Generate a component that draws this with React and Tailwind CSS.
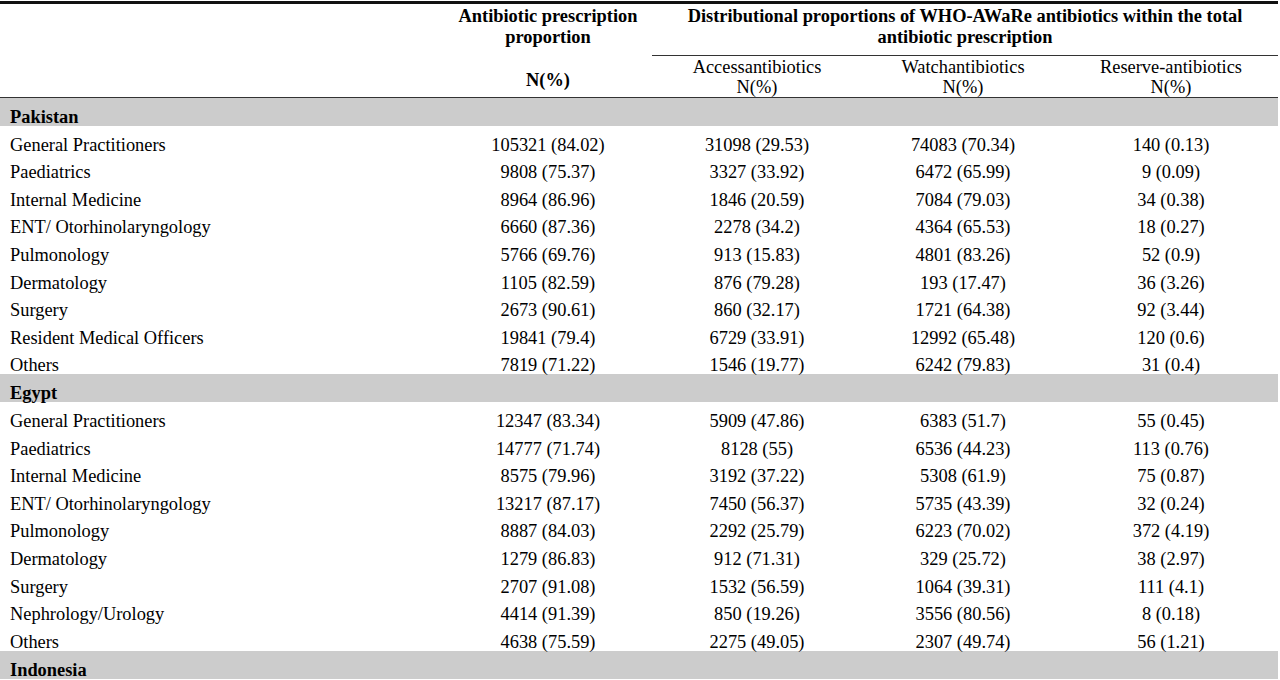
import React from "react";

const sections = [
  {
    name: "Pakistan",
    rows: [
      ["General Practitioners", "105321 (84.02)", "31098 (29.53)", "74083 (70.34)", "140 (0.13)"],
      ["Paediatrics", "9808 (75.37)", "3327 (33.92)", "6472 (65.99)", "9 (0.09)"],
      ["Internal Medicine", "8964 (86.96)", "1846 (20.59)", "7084 (79.03)", "34 (0.38)"],
      ["ENT/ Otorhinolaryngology", "6660 (87.36)", "2278 (34.2)", "4364 (65.53)", "18 (0.27)"],
      ["Pulmonology", "5766 (69.76)", "913 (15.83)", "4801 (83.26)", "52 (0.9)"],
      ["Dermatology", "1105 (82.59)", "876 (79.28)", "193 (17.47)", "36 (3.26)"],
      ["Surgery", "2673 (90.61)", "860 (32.17)", "1721 (64.38)", "92 (3.44)"],
      ["Resident Medical Officers", "19841 (79.4)", "6729 (33.91)", "12992 (65.48)", "120 (0.6)"],
      ["Others", "7819 (71.22)", "1546 (19.77)", "6242 (79.83)", "31 (0.4)"],
    ],
  },
  {
    name: "Egypt",
    rows: [
      ["General Practitioners", "12347 (83.34)", "5909 (47.86)", "6383 (51.7)", "55 (0.45)"],
      ["Paediatrics", "14777 (71.74)", "8128 (55)", "6536 (44.23)", "113 (0.76)"],
      ["Internal Medicine", "8575 (79.96)", "3192 (37.22)", "5308 (61.9)", "75 (0.87)"],
      ["ENT/ Otorhinolaryngology", "13217 (87.17)", "7450 (56.37)", "5735 (43.39)", "32 (0.24)"],
      ["Pulmonology", "8887 (84.03)", "2292 (25.79)", "6223 (70.02)", "372 (4.19)"],
      ["Dermatology", "1279 (86.83)", "912 (71.31)", "329 (25.72)", "38 (2.97)"],
      ["Surgery", "2707 (91.08)", "1532 (56.59)", "1064 (39.31)", "111 (4.1)"],
      ["Nephrology/Urology", "4414 (91.39)", "850 (19.26)", "3556 (80.56)", "8 (0.18)"],
      ["Others", "4638 (75.59)", "2275 (49.05)", "2307 (49.74)", "56 (1.21)"],
    ],
  },
  { name: "Indonesia", rows: [] },
];

function Row({ r }) {
  return (
    <div className="flex h-[27.6px] items-end leading-[18px]">
      <div className="w-[444px] pl-[10px] whitespace-nowrap">{r[0]}</div>
      <div className="w-[208px] text-center whitespace-nowrap">{r[1]}</div>
      <div className="w-[210px] text-center whitespace-nowrap">{r[2]}</div>
      <div className="w-[202px] text-center whitespace-nowrap">{r[3]}</div>
      <div className="w-[214px] text-center whitespace-nowrap">{r[4]}</div>
    </div>
  );
}

export default function App() {
  return (
    <div className="h-[680px] w-[1280px] overflow-hidden bg-white font-['Liberation_Serif','Times_New_Roman',serif] text-[18.4px] text-black">
      <div className="w-[1278px]">
        <div className="mt-[1px] h-[3px] bg-[#111]" />
        <div className="flex h-[94px] border-b border-[#333]">
          <div className="w-[444px]" />
          <div className="w-[208px] pt-[1.5px] text-center font-bold leading-[21px]">
            <div className="whitespace-nowrap">Antibiotic prescription</div>
            <div>proportion</div>
            <div className="mt-[22px]">N(%)</div>
          </div>
          <div className="flex w-[626px] flex-col">
            <div className="h-[52px] border-b border-[#333] pt-[1.5px] text-center font-bold leading-[21px] whitespace-nowrap">
              Distributional proportions of WHO-AWaRe antibiotics within the total
              <br />
              antibiotic prescription
            </div>
            <div className="flex pt-[1px] leading-[20px]">
              <div className="w-[210px] text-center">
                Accessantibiotics
                <br />
                N(%)
              </div>
              <div className="w-[202px] text-center">
                Watchantibiotics
                <br />
                N(%)
              </div>
              <div className="w-[214px] text-center">
                Reserve-antibiotics
                <br />
                N(%)
              </div>
            </div>
          </div>
        </div>
        {sections.map((s) => (
          <div key={s.name}>
            <div className="flex h-[28px] items-end bg-[#cccccc] pl-[10px] font-bold leading-[18px]">
              {s.name}
            </div>
            {s.rows.map((r, i) => (
              <Row key={i} r={r} />
            ))}
          </div>
        ))}
      </div>
    </div>
  );
}
